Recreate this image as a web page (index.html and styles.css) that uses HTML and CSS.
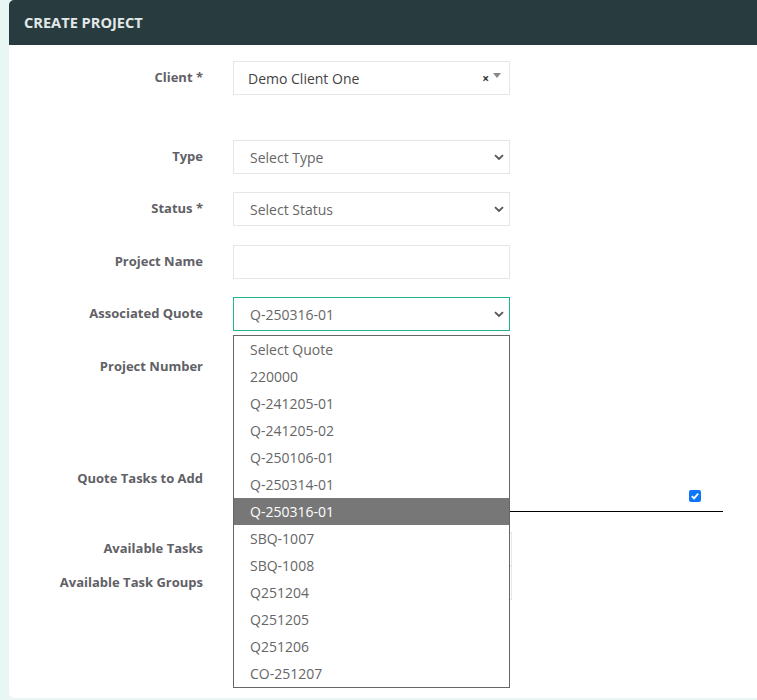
FILE: index.html
```html
<!DOCTYPE html>
<html>
<head>
<meta charset="utf-8">
<link rel="stylesheet" href="styles.css">
</head>
<body>
<div class="card">
  <div class="card-header">Create Project</div>
  <div class="card-body">
    <div class="row row-client">
      <div class="label">Client *</div>
      <div class="field">
        <div class="box select2">
          <span class="value">Demo Client One</span>
          <span class="s2-clear">×</span>
          <span class="s2-arrow"></span>
        </div>
      </div>
    </div>
    <div class="row row-type">
      <div class="label">Type</div>
      <div class="field">
        <div class="box select">
          <span class="placeholder">Select Type</span>
          <svg class="chev" width="10" height="7" viewBox="0 0 10 7"><path d="M1 1.2 L5 5 L9 1.2" fill="none" stroke="#555" stroke-width="1.8"/></svg>
        </div>
      </div>
    </div>
    <div class="row row-status">
      <div class="label">Status *</div>
      <div class="field">
        <div class="box select">
          <span class="placeholder">Select Status</span>
          <svg class="chev" width="10" height="7" viewBox="0 0 10 7"><path d="M1 1.2 L5 5 L9 1.2" fill="none" stroke="#555" stroke-width="1.8"/></svg>
        </div>
      </div>
    </div>
    <div class="row row-name">
      <div class="label">Project Name</div>
      <div class="field">
        <div class="box"></div>
      </div>
    </div>
    <div class="row row-quote">
      <div class="label">Associated Quote</div>
      <div class="field quote-field">
        <div class="box select focused">
          <span class="placeholder">Q-250316-01</span>
          <svg class="chev" width="10" height="7" viewBox="0 0 10 7"><path d="M1 1.2 L5 5 L9 1.2" fill="none" stroke="#555" stroke-width="1.8"/></svg>
        </div>
        <ul class="dropdown">
          <li>Select Quote</li>
          <li>220000</li>
          <li>Q-241205-01</li>
          <li>Q-241205-02</li>
          <li>Q-250106-01</li>
          <li>Q-250314-01</li>
          <li class="active">Q-250316-01</li>
          <li>SBQ-1007</li>
          <li>SBQ-1008</li>
          <li>Q251204</li>
          <li>Q251205</li>
          <li>Q251206</li>
          <li>CO-251207</li>
        </ul>
      </div>
    </div>
    <div class="row row-number">
      <div class="label">Project Number</div>
      <div class="field">
        <div class="box"></div>
      </div>
    </div>
    <div class="row row-tasks">
      <div class="label">Quote Tasks to Add</div>
      <div class="field tasks-field">
        <div class="tasks-table">
          <span class="checkbox">
            <svg width="12" height="12" viewBox="0 0 12 12"><rect width="12" height="12" rx="2" fill="#0b76fa"/><path d="M2.8 6.2 L5 8.4 L9.2 3.6" fill="none" stroke="#fff" stroke-width="1.9"/></svg>
          </span>
        </div>
      </div>
    </div>
    <div class="row row-avail">
      <div class="label">Available Tasks</div>
      <div class="field">
        <div class="box wide"></div>
      </div>
    </div>
    <div class="row row-groups">
      <div class="label">Available Task Groups</div>
      <div class="field">
        <div class="box wide"></div>
      </div>
    </div>
  </div>
</div>
</body>
</html>
```
FILE: styles.css
```css
html, body {
  margin: 0;
  padding: 0;
}
body {
  background: #e9f7f4;
  font-family: "Open Sans", "Noto Sans", sans-serif;
  height: 700px;
  overflow: hidden;
}
.card {
  margin-left: 9px;
  width: 770px;
  height: 698px;
  background: #fff;
  border-radius: 5px;
  overflow: visible;
}
.card-header {
  height: 45px;
  background: #283c40;
  border-radius: 5px 0 0 0;
  color: #e3e8e9;
  font-weight: 700;
  font-size: 14.6px;
  text-transform: uppercase;
  line-height: 45px;
  padding-left: 15px;
}
.card-body {
  padding-top: 16px;
}
.row {
  display: grid;
  grid-template-columns: 194px 1fr;
  column-gap: 30px;
  align-items: center;
  height: 34px;
}
.label {
  text-align: right;
  font-size: 13px;
  font-weight: 700;
  color: #5f6166;
  padding-bottom: 2px;
}
.field {
  position: relative;
}
.box {
  box-sizing: border-box;
  width: 277px;
  height: 34px;
  border: 1px solid #e6e6e6;
  background: #fff;
  display: flex;
  align-items: center;
  font-size: 14px;
}
.box.wide {
  width: 279px;
}
.select2 .value {
  padding-left: 14px;
  color: #444;
  flex: 1;
}
.s2-clear {
  font-weight: 700;
  font-size: 12px;
  color: #333;
  margin-right: 4px;
  margin-top: 1px;
}
.s2-arrow {
  width: 0;
  height: 0;
  border-left: 4px solid transparent;
  border-right: 4px solid transparent;
  border-top: 5px solid #888;
  margin-right: 8px;
  margin-top: -6px;
}
.select .placeholder {
  padding-left: 16px;
  color: #666;
  flex: 1;
}
.chev {
  margin-right: 5px;
}
.focused {
  border-color: #22b28f;
}
.row-client { margin-bottom: 45px; }
.row-type { margin-bottom: 18px; }
.row-status { margin-bottom: 19px; }
.row-name { margin-bottom: 18px; }
.row-quote { margin-bottom: 19px; z-index: 5; position: relative; }
.row-number { margin-bottom: 78px; }
.row-tasks {
  height: 50px;
  align-items: start;
  margin-bottom: 20px;
}
.row-tasks .label {
  padding-top: 7px;
}
.tasks-table {
  width: 490px;
  height: 49px;
  border-bottom: 1px solid #000;
  display: flex;
  justify-content: flex-end;
  align-items: flex-start;
}
.checkbox {
  display: block;
  width: 12px;
  height: 12px;
  margin-top: 28px;
  margin-right: 22px;
}
.checkbox svg {
  display: block;
}
.dropdown {
  position: absolute;
  top: 38px;
  left: 0;
  box-sizing: border-box;
  width: 277px;
  margin: 0;
  padding: 0;
  list-style: none;
  background: #fff;
  border: 1px solid #666;
  font-size: 14px;
  color: #666;
}
.dropdown li {
  height: 27px;
  line-height: 27px;
  padding-left: 16px;
}
.dropdown li.active {
  background: #777;
  color: #fff;
}
```
